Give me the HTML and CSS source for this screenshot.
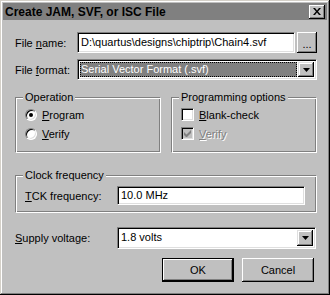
FILE: index.html
```html
<!DOCTYPE html>
<html lang="en">
<head>
    <meta charset="UTF-8">
    <meta name="viewport" content="width=device-width, initial-scale=1.0">
    <title>Create JAM, SVF, or ISC File</title>
    <link rel="stylesheet" href="styles.css">
</head>
<body>
    <div class="window">
      <div class="caption">
        <span class="caption-title">Create JAM, SVF, or ISC File</span>
        <span class="caption-close">
          <svg width="8" height="7" viewBox="0 0 8 7"><path d="M0 0h2l2 2.5L6 0h2L5 3.5 8 7H6L4 4.5 2 7H0l3-3.5z" fill="#000"/></svg>
        </span>
      </div>
      <div class="content">
        <div class="row row-file">
          <div class="label">File <u>n</u>ame:</div>
          <div class="textbox textbox-file">D:\quartus\designs\chiptrip\Chain4.svf</div>
          <div class="button button-browse">...</div>
        </div>
        <div class="row row-format">
          <div class="label">File <u>f</u>ormat:</div>
          <div class="combo combo-format">
            <span class="combo-value selected">Serial Vector Format (.svf)</span>
            <span class="combo-arrow"><svg width="7" height="4" viewBox="0 0 7 4"><path d="M0 0h7L3.5 4z" fill="#000"/></svg></span>
          </div>
        </div>
        <div class="groups">
          <fieldset class="group group-half">
            <legend>Operation</legend>
            <div class="option"><span class="radio checked"></span><span><u>P</u>rogram</span></div>
            <div class="option"><span class="radio"></span><span><u>V</u>erify</span></div>
          </fieldset>
          <fieldset class="group group-half">
            <legend>Programming options</legend>
            <div class="option"><span class="check"></span><span><u>B</u>lank-check</span></div>
            <div class="option disabled"><span class="check">
              <svg width="7" height="7" viewBox="0 0 7 7"><path d="M0 2v3l2 2h1l4-4V0L2.5 4.5z" fill="#808080"/></svg>
            </span><span><u>V</u>erify</span></div>
          </fieldset>
        </div>
        <fieldset class="group group-clock">
          <legend>Clock frequency</legend>
          <div class="row row-tck">
            <div class="label label-tck"><u>T</u>CK frequency:</div>
            <div class="textbox textbox-tck">10.0 MHz</div>
          </div>
        </fieldset>
        <div class="row row-supply">
          <div class="label label-supply"><u>S</u>upply voltage:</div>
          <div class="combo combo-supply">
            <span class="combo-value">1.8 volts</span>
            <span class="combo-arrow"><svg width="7" height="4" viewBox="0 0 7 4"><path d="M0 0h7L3.5 4z" fill="#000"/></svg></span>
          </div>
        </div>
        <div class="actions">
          <div class="button button-default">OK</div>
          <div class="button">Cancel</div>
        </div>
      </div>
    </div>
</body>
</html>
```

FILE: styles.css
```css
* {
  box-sizing: border-box;
}

body {
  margin: 0;
  font-family: 'Liberation Sans', Arial, sans-serif;
  font-size: 11px;
  color: #000;
  background: #c0c0c0;
}

u {
  text-decoration: underline;
  text-underline-offset: 1px;
}

.window {
  width: 330px;
  height: 295px;
  padding: 3px;
  background: #c0c0c0;
  box-shadow: inset -1px -1px #000, inset 1px 1px #d4d0c8, inset -2px -2px #808080, inset 2px 2px #fff;
  display: flex;
  flex-direction: column;
}

.caption {
  height: 17px;
  background: #808080;
  display: flex;
  align-items: center;
  justify-content: space-between;
  padding: 0 2px 0 2px;
}

.caption-title {
  font-weight: bold;
  font-size: 12px;
}

.caption-close {
  width: 16px;
  height: 14px;
  background: #c0c0c0;
  box-shadow: inset -1px -1px #000, inset 1px 1px #fff, inset -2px -2px #808080;
  display: flex;
  align-items: center;
  justify-content: center;
}

.content {
  padding: 12px 10px 0 12px;
  display: flex;
  flex-direction: column;
}

.row {
  display: flex;
  align-items: center;
}

.label {
  width: 62px;
}

.textbox {
  height: 21px;
  background: #fff;
  border: 1px solid;
  border-color: #808080 #fff #fff #808080;
  box-shadow: inset 1px 1px #000, inset -1px -1px #dfdfdf;
  padding: 3px 0 0 3px;
  white-space: nowrap;
  overflow: hidden;
}

.textbox-file {
  width: 218px;
}

.button {
  background: #c0c0c0;
  box-shadow: inset -1px -1px #000, inset 1px 1px #fff, inset -2px -2px #808080;
  display: flex;
  align-items: center;
  justify-content: center;
}

.button-browse {
  width: 20px;
  height: 21px;
  margin-left: 2px;
  padding-top: 2px;
}

.row-format {
  margin-top: 6px;
}

.combo {
  height: 21px;
  background: #fff;
  border: 1px solid;
  border-color: #808080 #fff #fff #808080;
  box-shadow: inset 1px 1px #000, inset -1px -1px #dfdfdf;
  display: flex;
  padding: 2px;
}

.combo-format {
  width: 240px;
}

.combo-value {
  flex: 1;
  padding: 1px 0 0 1px;
  white-space: nowrap;
}

.combo-value.selected {
  background: #808080;
  color: #fff;
  outline: 1px dotted #000;
  outline-offset: -1px;
  margin-right: 1px;
}

.combo-arrow {
  width: 16px;
  background: #c0c0c0;
  box-shadow: inset -1px -1px #000, inset 1px 1px #dfdfdf, inset -2px -2px #808080, inset 2px 2px #fff;
  display: flex;
  align-items: center;
  justify-content: center;
}

.groups {
  display: flex;
  gap: 10px;
  margin-top: 11px;
}

.group {
  margin: 0;
  padding: 0 0 0 9px;
  border: 1px solid;
  border-color: #808080 #fff #fff #808080;
  box-shadow: inset 1px 1px #fff, inset -1px -1px #808080;
}

.group legend {
  padding: 0 2px;
  margin-left: -2px;
  background: #c0c0c0;
  line-height: 13px;
}

.group-half {
  width: 146px;
  height: 62px;
}

.option {
  display: flex;
  align-items: center;
  height: 19px;
}

.option:first-of-type {
  margin-top: 1px;
}

.radio {
  width: 12px;
  height: 12px;
  border-radius: 50%;
  background: #fff;
  border: 1px solid;
  border-color: #808080 #fff #fff #808080;
  box-shadow: inset 1px 1px #000, inset -1px -1px #dfdfdf;
  margin-right: 5px;
  display: flex;
  align-items: center;
  justify-content: center;
}

.radio.checked::after {
  content: "";
  width: 4px;
  height: 4px;
  border-radius: 50%;
  background: #000;
}

.check {
  width: 13px;
  height: 13px;
  background: #fff;
  border: 1px solid;
  border-color: #808080 #fff #fff #808080;
  box-shadow: inset 1px 1px #000, inset -1px -1px #dfdfdf;
  margin-right: 5px;
  display: flex;
  align-items: center;
  justify-content: center;
}

.disabled .check {
  background: #c0c0c0;
}

.disabled {
  color: #808080;
  text-shadow: 1px 1px #fff;
}

.group-clock {
  margin-top: 16px;
  height: 44px;
}

.row-tck {
  margin-top: 4px;
}

.label-tck {
  width: 92px;
}

.textbox-tck {
  width: 188px;
  height: 19px;
  padding-top: 2px;
}

.row-supply {
  margin-top: 14px;
}

.label-supply {
  width: 102px;
}

.combo-supply {
  width: 199px;
  height: 22px;
}

.actions {
  display: flex;
  justify-content: flex-end;
  gap: 8px;
  margin-top: 9px;
  padding-right: 3px;
}

.actions .button {
  width: 72px;
  height: 24px;
}

.button-default {
  box-shadow: inset 0 0 0 1px #000, inset -2px -2px #000, inset 2px 2px #fff, inset -3px -3px #808080;
}
```
